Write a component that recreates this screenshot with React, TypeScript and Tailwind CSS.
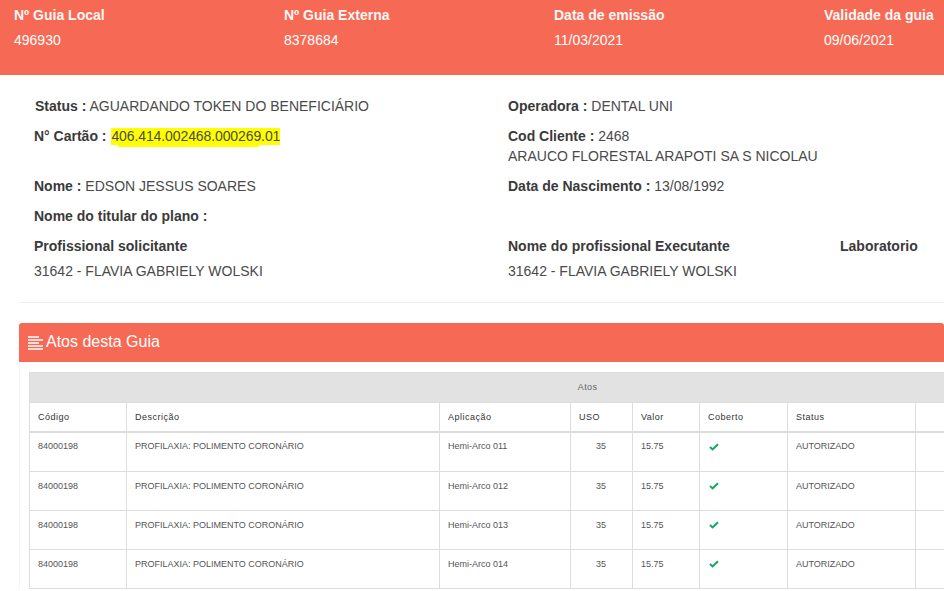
import React from "react";

const guideInfo = [
  { label: "Nº Guia Local", value: "496930" },
  { label: "Nº Guia Externa", value: "8378684" },
  { label: "Data de emissão", value: "11/03/2021" },
  { label: "Validade da guia", value: "09/06/2021" },
];

const columns = [
  { title: "Código", width: "w-[97px]" },
  { title: "Descrição", width: "w-[313px]" },
  { title: "Aplicação", width: "w-[131px]" },
  { title: "USO", width: "w-[62px]" },
  { title: "Valor", width: "w-[67px]" },
  { title: "Coberto", width: "w-[88px]" },
  { title: "Status", width: "w-[128px]" },
  { title: "", width: "w-[230px]" },
];

const acts = ["011", "012", "013", "014"];

const Field = ({ label, value }: { label: string; value?: string }) => (
  <p className="text-[14px] leading-[20px] text-[#4a4a4a]">
    <b className="font-bold text-[#3a3a3a]">{label} :</b> {value}
  </p>
);

const Check = () => (
  <svg viewBox="0 0 12 10" className="ml-[1px] h-[8px] w-[10px]">
    <path d="M1 5l3.2 3L11 1.5" fill="none" stroke="#10a960" strokeWidth="2.6" />
  </svg>
);

const cell = "border border-[#ddd] px-[8px] align-top";

export default function App() {
  return (
    <div className="h-[591px] w-[944px] overflow-hidden bg-white font-['Liberation_Sans',Arial,sans-serif]">
      <div className="grid h-[75px] grid-cols-[270px_270px_270px_134px] bg-[#f66a55] pl-[14px] pt-[5px] text-white">
        {guideInfo.map((item) => (
          <div key={item.label} className="whitespace-nowrap text-[14px] leading-[20px]">
            <div className="font-bold opacity-95">{item.label}</div>
            <div className="mt-[5px]">{item.value}</div>
          </div>
        ))}
      </div>

      <div className="ml-[19px] border-b border-[#eee] pb-[21px] pt-[21px]">
        <div className="grid grid-cols-[474px_1fr] pl-[15px]">
          <div className="pl-[1px]">
            <Field label="Status" value="AGUARDANDO TOKEN DO BENEFICIÁRIO" />
          </div>
          <Field label="Operadora" value="DENTAL UNI" />

          <div className="mt-[10px]">
            <p className="text-[14px] leading-[20px] text-[#4a4a4a]">
              <b className="font-bold text-[#3a3a3a]">N° Cartão :</b>{" "}
              <span className="relative ml-[1px] bg-[#ffff00] pb-[1px] tracking-[-0.1px]">
                406.414.002468.000269.01
                <span className="absolute left-[7px] top-[16px] h-[3px] w-[141px] bg-[#ffff00]"></span>
              </span>
            </p>
          </div>
          <div className="mt-[10px]">
            <Field label="Cod Cliente" value="2468" />
            <p className="text-[14px] leading-[20px] text-[#4a4a4a]">ARAUCO FLORESTAL ARAPOTI SA S NICOLAU</p>
          </div>

          <div className="mt-[10px]">
            <Field label="Nome" value="EDSON JESSUS SOARES" />
          </div>
          <div className="mt-[10px]">
            <Field label="Data de Nascimento" value="13/08/1992" />
          </div>

          <div className="col-span-2 mt-[10px]">
            <Field label="Nome do titular do plano" />
          </div>

          <div className="mt-[10px]">
            <p className="text-[14px] font-bold leading-[20px] text-[#3a3a3a]">Profissional solicitante</p>
            <p className="mt-[5px] text-[14px] leading-[20px] text-[#4a4a4a]">31642 - FLAVIA GABRIELY WOLSKI</p>
          </div>
          <div className="mt-[10px] flex">
            <div className="w-[332px]">
              <p className="text-[14px] font-bold leading-[20px] text-[#3a3a3a]">Nome do profissional Executante</p>
              <p className="mt-[5px] text-[14px] leading-[20px] text-[#4a4a4a]">31642 - FLAVIA GABRIELY WOLSKI</p>
            </div>
            <p className="text-[14px] font-bold leading-[20px] text-[#3a3a3a]">Laboratorio</p>
          </div>
        </div>
      </div>

      <div className="ml-[19px] mt-[20px]">
        <div className="flex h-[39px] items-center gap-[2px] rounded-t-[3px] bg-[#f66a55] pb-[2px] pl-[9px] text-[16px] text-white">
          <svg viewBox="0 0 16 14" className="mt-[2px] h-[14px] w-[16px]">
            <path d="M0 1h11M0 4h15M0 7h11M0 10h15M0 13h15" fill="none" stroke="#fff" strokeWidth="1.500" />
          </svg>
          <span>Atos desta Guia</span>
        </div>

        <div className="border-l border-[#f5f5f5] pl-[9px] pt-[10px]">
          <table className="w-[1116px] table-fixed border-collapse text-[9px] text-[#555]">
            <colgroup>
              {columns.map((col) => (
                <col key={col.title} className={col.width} />
              ))}
            </colgroup>
            <thead>
              <tr className="h-[30px] bg-[#e2e2e2]">
                <th colSpan={8} className="border border-[#ddd] text-center font-normal tracking-[0.4px] text-[#666]">
                  Atos
                </th>
              </tr>
              <tr className="h-[29px] border-b-2 border-[#ddd]">
                {columns.map((col) => (
                  <th key={col.title} className="border border-[#ddd] px-[8px] pt-[2px] text-left font-normal tracking-[0.5px] text-[#333]">
                    {col.title}
                  </th>
                ))}
              </tr>
            </thead>
            <tbody>
              {acts.map((arco, i) => (
                <tr key={arco} className={i === 0 ? "h-[40px]" : "h-[39px]"}>
                  <td className={`${cell} ${i === 0 ? "pt-[7px]" : "pt-[8px]"}`}>84000198</td>
                  <td className={`${cell} ${i === 0 ? "pt-[7px]" : "pt-[8px]"}`}>PROFILAXIA: POLIMENTO CORONÁRIO</td>
                  <td className={`${cell} ${i === 0 ? "pt-[7px]" : "pt-[8px]"}`}>Hemi-Arco {arco}</td>
                  <td className={`${cell} ${i === 0 ? "pt-[7px]" : "pt-[8px]"} pr-[26px] text-right`}>35</td>
                  <td className={`${cell} ${i === 0 ? "pt-[7px]" : "pt-[8px]"}`}>15.75</td>
                  <td className={`${cell} pt-[10px]`}>
                    <Check />
                  </td>
                  <td className={`${cell} ${i === 0 ? "pt-[7px]" : "pt-[8px]"}`}>AUTORIZADO</td>
                  <td className={cell}></td>
                </tr>
              ))}
            </tbody>
          </table>
        </div>
      </div>
    </div>
  );
}
